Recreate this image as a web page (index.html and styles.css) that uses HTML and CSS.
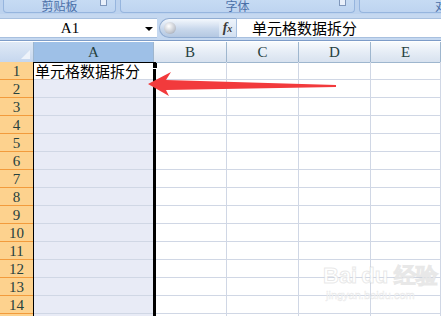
FILE: index.html
```html
<!DOCTYPE html>
<html>
<head>
<meta charset="utf-8">
<link rel="stylesheet" href="styles.css">
</head>
<body>
<div class="app">
  <div class="ribbon">
    <div class="group g1"><span class="glabel">剪贴板</span><span class="launch"></span></div>
    <div class="group g2"><span class="glabel">字体</span><span class="launch"></span></div>
    <div class="group g3"><span class="glabel x">对</span></div>
  </div>
  <div class="fbar">
    <div class="namebox"><span class="nbtext">A1</span><span class="dd"></span></div>
    <div class="pill"><span class="knob"></span></div>
    <div class="fx"><i>f</i><span>x</span></div>
    <div class="formula">单元格数据拆分</div>
  </div>
  <div class="sheet">
    <div class="corner"><span class="tri"></span></div>
    <div class="ch sel">A</div>
    <div class="ch">B</div>
    <div class="ch">C</div>
    <div class="ch">D</div>
    <div class="ch">E</div>
  </div>
  <div class="rows" id="rows"></div>
  <svg class="arrow" width="441" height="316" viewBox="0 0 441 316">
    <polygon points="148,84 171,72 166,80 336,85 336,87 166,90 169,96" fill="#f23a3c"/>
  </svg>
  <div class="wm">
    <div class="wm1">Bai<span class="paw"></span>du 经验</div>
    <div class="wm2">jingyan.baidu.com</div>
  </div>
</div>
<script src="app.js"></script>
</body>
</html>
```
FILE: app.js
```js
var rows = document.getElementById('rows');
var html = '';
for (var i = 1; i <= 15; i++) {
  html += '<div class="rh">' + i + '</div>';
  html += '<div class="c ca' + (i === 1 ? ' active' : '') + '">' + (i === 1 ? '单元格数据拆分' : '') + '</div>';
  html += '<div class="c"></div><div class="c"></div><div class="c"></div><div class="c"></div>';
}
rows.innerHTML = html + '<div class="selbox"><span class="handle"></span></div>';
```
FILE: styles.css
```css
* { box-sizing: border-box; margin: 0; padding: 0; }
html, body { width: 441px; height: 316px; overflow: hidden; background: #fff; }
body { font-family: "Liberation Serif", serif; }
.app { position: relative; width: 441px; height: 316px; overflow: hidden; background: #fff; }

.ribbon { height: 14px; display: flex; gap: 4px; padding: 0 0 0 3px; background: #bcd2ee; }
.group { position: relative; height: 13px; background: linear-gradient(#c6dbf3, #bed4f0); border: 1px solid #96b5de; border-top: none; border-radius: 0 0 4px 4px; display: flex; justify-content: center; align-items: flex-end; overflow: hidden; }
.g1 { width: 113px; }
.g2 { width: 235px; }
.g3 { flex: 1; border-right: none; border-radius: 0 0 0 4px; justify-content: flex-end; }
.glabel { font-family: "Noto Sans CJK SC", sans-serif; font-size: 12px; line-height: 12px; color: #4a6fa8; position: relative; top: 0; }
.x { right: -6px; }
.launch { position: absolute; right: 8px; top: 0; width: 7px; height: 6px; border: 1px solid #7f97bb; border-top: none; background: #e9f0fa; }

.fbar { height: 27px; background: #c5d8f0; padding: 4px 0 0 0; display: flex; align-items: stretch; border-bottom: 1px solid #7d9cc8; }
.fbar > div { height: 20px; }
.namebox { width: 157px; background: #fff; border-top: 1px solid #a8c0df; border-bottom: 1px solid #a8c0df; display: flex; align-items: center; position: relative; }
.nbtext { width: 140px; text-align: center; font-size: 15px; color: #000; font-family: "Liberation Serif", serif; }
.dd { position: absolute; left: 145px; top: 8px; width: 0; height: 0; border-left: 4px solid transparent; border-right: 4px solid transparent; border-top: 4px solid #000; }
.pill { width: 60px; margin-left: 2px; border-radius: 10px 0 0 10px; background: linear-gradient(#f4f8fd, #c9d8ec 55%, #b4c8e2); border: 1px solid #90acd2; border-right: none; position: relative; }
.knob { position: absolute; left: 4px; top: 3px; width: 12px; height: 12px; border-radius: 50%; background: radial-gradient(circle at 40% 35%, #fff, #c4c8d0 60%, #8e98a8); }
.fx { width: 17px; background: linear-gradient(#eef4fb, #d2e0f1); border-top: 1px solid #90acd2; border-bottom: 1px solid #90acd2; font-family: "Liberation Serif", serif; font-weight: bold; font-size: 14px; color: #3a3a3a; display: flex; align-items: center; justify-content: center; }
.fx i { font-style: italic; }
.fx span { font-size: 10px; font-style: italic; }
.formula { flex: 1; background: #fff; border: 1px solid #a8c0df; border-right: none; padding-left: 15px; font-family: "Noto Sans CJK SC", sans-serif; font-size: 15px; line-height: 18px; color: #000; }

.sheet { margin-top: 1px; display: grid; grid-template-columns: 34px 120px 73px 72px 72px 70px; height: 20px; }
.corner { background: linear-gradient(#dfe9f6, #c6d7ee); border-right: 1px solid #9eb6ce; border-bottom: 1px solid #9eb6ce; position: relative; }
.tri { position: absolute; right: 3px; bottom: 3px; width: 0; height: 0; border-left: 9px solid transparent; border-bottom: 9px solid #eef3fa; }
.ch { background: linear-gradient(#f8fbfd, #e6edf6 50%, #d8e2ef); border-right: 1px solid #9eb6ce; border-bottom: 1px solid #9eb6ce; font-size: 15px; line-height: 20px; text-align: center; color: #27413e; }
.ch.sel { background: #9ec0e7; border-bottom-color: #9ec0e7; }

.rows { position: relative; display: grid; grid-template-columns: 34px 120px 73px 72px 72px 70px; grid-auto-rows: 18px; }
.rh { background: #fdd28e; border-right: 1px solid #f0a24a; border-bottom: 1px solid #f29b3c; font-size: 15px; line-height: 18px; text-align: center; color: #27413e; }
.c { border-right: 1px solid #d0d7e5; border-bottom: 1px solid #d0d7e5; }
.ca { background: #e8ebf6; border-right-color: #e8ebf6; }
.active { background: #fff; font-family: "Noto Sans CJK SC", sans-serif; font-size: 15px; line-height: 17px; color: #000; padding-left: 1px; white-space: nowrap; }
.selbox { position: absolute; left: 33px; top: 0; width: 123px; height: 300px; border-left: 1px solid #000; border-top: 1px solid #000; border-right: 3px solid #000; }
.handle { position: absolute; right: -5px; top: 0; width: 6px; height: 6px; background: #000; border: 1px solid #fff; border-top: none; }

.arrow { position: absolute; left: 0; top: 0; }

.wm { position: absolute; left: 323px; top: 263px; color: rgba(255, 255, 255, 0.9); -webkit-text-stroke: 1px rgba(190, 190, 190, 0.35); font-family: "Liberation Sans", sans-serif; }
.wm1 { font-size: 22px; font-weight: bold; line-height: 26px; }
.wm1 .paw { display: inline-block; width: 4px; }
.wm2 { font-size: 11px; line-height: 12px; margin-left: 3px; -webkit-text-stroke: 0.5px rgba(190, 190, 190, 0.35); }
```
